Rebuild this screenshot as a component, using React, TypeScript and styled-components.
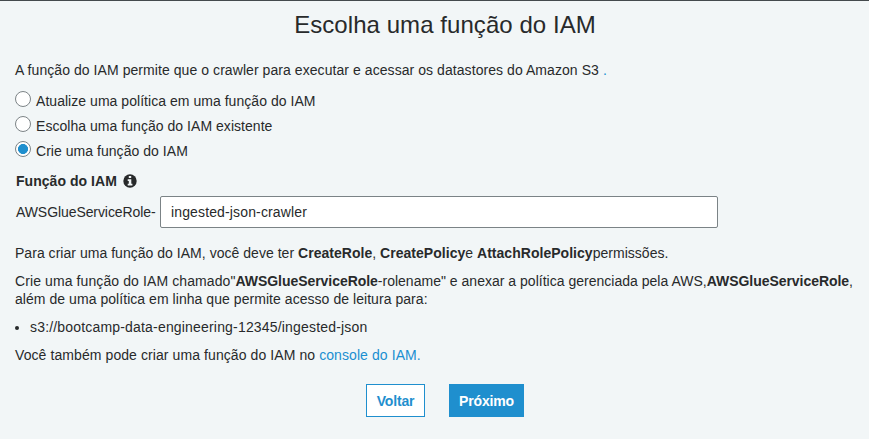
import React, { useState } from "react";
import styled, { createGlobalStyle } from "styled-components";

const GlobalStyle = createGlobalStyle`
  *, *::before, *::after { box-sizing: border-box; }
  body {
    margin: 0;
    background: #f2f6f7;
    color: #282a2b;
    font: 14px/18px "Liberation Sans", Arial, sans-serif;
  }
`;

const Page = styled.main`
  min-height: 439px;
  padding: 8px 15px 0;
  border-top: 1px solid #444a4d;
  background: #f2f6f7;
`;

const Title = styled.h1`
  margin: 0 0 20px;
  padding-left: 21px;
  font-size: 24px;
  line-height: 32px;
  font-weight: 400;
  text-align: center;
  letter-spacing: 0.06px;
`;

const Text = styled.span<{ $spacing: number }>`
  letter-spacing: ${(p) => p.$spacing}px;
`;

const Paragraph = styled.p`
  margin: 0 0 10px;
  white-space: nowrap;
`;

const Link = styled.a`
  color: #1a8fd1;
  text-decoration: none;
`;

const RadioGroup = styled.div`
  display: flex;
  flex-direction: column;
  gap: 6px;
  padding-top: 2px;
`;

const RadioLabel = styled.label`
  display: flex;
  gap: 5px;
  height: 19px;
  align-items: flex-end;
  letter-spacing: 0.04px;
`;

const Radio = styled.input`
  appearance: none;
  align-self: flex-start;
  width: 16px;
  height: 16px;
  margin: 0;
  border: 1px solid #7d8487;
  border-radius: 50%;
  background: #fff;
  &:checked {
    background: radial-gradient(circle, #1f8fce 4.7px, #fff 5.3px);
  }
`;

const FieldLabel = styled.div`
  display: flex;
  align-items: center;
  gap: 6px;
  margin: 12px 0 6px 1px;
  font-weight: 700;
  letter-spacing: 0.04px;
`;

const FieldRow = styled.div`
  display: flex;
  align-items: center;
  margin: 0 0 16px 1px;
`;

const Prefix = styled.span`
  width: 144px;
  letter-spacing: -0.08px;
`;

const TextInput = styled.input`
  width: 558px;
  height: 32px;
  padding: 0 10px;
  border: 1px solid #7b8386;
  border-radius: 2px;
  background: #fff;
  color: #282a2b;
  font: inherit;
  letter-spacing: 0.14px;
  outline: none;
`;

const List = styled.ul`
  margin: 0 0 10px;
  padding: 0;
  list-style: none;
`;

const Item = styled.li`
  display: flex;
  align-items: center;
  gap: 11px;
  letter-spacing: 0.18px;
  &::before {
    content: "";
    width: 4px;
    height: 4px;
    margin-top: 2px;
    border-radius: 50%;
    background: #282a2b;
  }
`;

const Actions = styled.div`
  display: flex;
  justify-content: center;
  gap: 24px;
  padding: 10px 0 0 21px;
`;

const Button = styled.button<{ $primary?: boolean }>`
  width: ${(p) => (p.$primary ? 75 : 59)}px;
  height: 33px;
  padding: 0;
  border: 1px solid #1f8fce;
  border-radius: 0;
  background: ${(p) => (p.$primary ? "#1f8fce" : "#fff")};
  color: ${(p) => (p.$primary ? "#fff" : "#1f8fce")};
  font: 700 14px/18px "Liberation Sans", Arial, sans-serif;
  letter-spacing: -0.15px;
`;

const InfoIcon = () => (
  <svg width="14" height="14" viewBox="0 0 14 14" aria-hidden="true">
    <circle cx="7" cy="7" r="6.7" fill="#282a2b" />
    <path fill="#f2f6f7" d="M5.8 2h2.4v2H5.8zM4.7 5.2h3.6v4.6h1.1v1.7H4.7V9.8h1.1V6.9H4.7z" />
  </svg>
);

const options = [
  "Atualize uma política em uma função do IAM",
  "Escolha uma função do IAM existente",
  "Crie uma função do IAM",
];

export default function App() {
  const [selected, setSelected] = useState(2);
  const [role, setRole] = useState("ingested-json-crawler");
  return (
    <Page>
      <GlobalStyle />
      <Title>Escolha uma função do IAM</Title>
      <Paragraph>
        <Text $spacing={0.065}>
          A função do IAM permite que o crawler para executar e acessar os datastores do Amazon S3 <Link>.</Link>
        </Text>
      </Paragraph>
      <RadioGroup>
        {options.map((text, i) => (
          <RadioLabel key={text}>
            <Radio type="radio" name="role" checked={selected === i} onChange={() => setSelected(i)} />
            {text}
          </RadioLabel>
        ))}
      </RadioGroup>
      <FieldLabel>
        Função do IAM <InfoIcon />
      </FieldLabel>
      <FieldRow>
        <Prefix>AWSGlueServiceRole-</Prefix>
        <TextInput value={role} onChange={(e) => setRole(e.target.value)} />
      </FieldRow>
      <Paragraph>
        <Text $spacing={0.03}>
          Para criar uma função do IAM, você deve ter <b>CreateRole</b>, <b>CreatePolicy</b>e <b>AttachRolePolicy</b>permissões.
        </Text>
      </Paragraph>
      <Paragraph>
        <Text $spacing={0.1}>Crie uma função do IAM chamado"</Text>
        <Text $spacing={-0.05}><b>AWSGlueServiceRole</b></Text>
        <Text $spacing={0.015}>-rolename" e anexar a política gerenciada pela AWS,</Text>
        <Text $spacing={-0.05}><b>AWSGlueServiceRole</b>,</Text>
        <br />
        <Text $spacing={0.05}>além de uma política em linha que permite acesso de leitura para:</Text>
      </Paragraph>
      <List>
        <Item>s3://bootcamp-data-engineering-12345/ingested-json</Item>
      </List>
      <Paragraph>
        <Text $spacing={0.085}>
          Você também pode criar uma função do IAM no <Link>console do IAM.</Link>
        </Text>
      </Paragraph>
      <Actions>
        <Button>Voltar</Button>
        <Button $primary>Próximo</Button>
      </Actions>
    </Page>
  );
}
